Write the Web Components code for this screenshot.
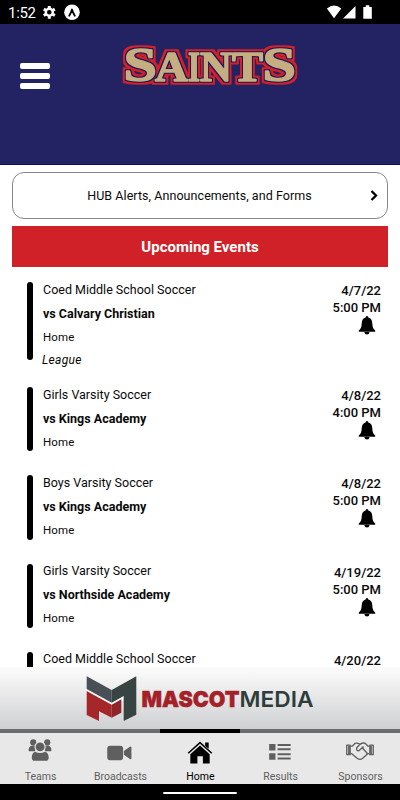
<!DOCTYPE html>
<html lang="en">
<head>
<meta charset="utf-8">
<title>Saints</title>
<style>
  body {
    margin: 0;
    font-family: Roboto, "Liberation Sans", sans-serif;
    color: #0a0a0a;
    background: #fff;
  }
</style>
</head>
<body>
<saints-app></saints-app>

<script>
/**
 * @param {string} name
 * @param {string} html
 */
function define (name, html) {
  customElements.define(name, class extends HTMLElement {
    constructor () {
      super();
      this.attachShadow({ mode: 'open' }).innerHTML = html;
    }
  });
}

define('status-bar', /*html*/ `
  <style>
    :host {
      display: flex;
      align-items: center;
      height: 24px;
      padding: 0 28px 0 8px;
      background: #000;
      color: #fff;
      font-size: 15px;
    }
    time { width: 35px; letter-spacing: -0.3px; line-height: 24px; padding-top: 1px; }
    .left { margin-right: auto; }
    svg { display: block; }
  </style>
  <time>1:52</time>
  <svg class="left" width="40" height="24" viewBox="0 0 40 24">
    <g transform="translate(6.3 12.3)">
      <circle r="3.5" fill="none" stroke="#fff" stroke-width="2.4"/>
      <g fill="none" stroke="#fff" stroke-width="3">
        <path d="M0-4V-6.4M0 4V6.4M-3.5-2-5.5-3.2M3.5-2 5.5-3.2M-3.5 2-5.5 3.2M3.5 2 5.5 3.2"/>
      </g>
    </g>
    <circle cx="29" cy="12.3" r="7.8" fill="#fff"/>
    <path d="M26.2 15.8Q28 13 29 9.5Q30 13 31.8 15.8" fill="none" stroke="#000" stroke-width="1.8" stroke-linecap="round" stroke-linejoin="round"/>
  </svg>
  <svg width="46" height="24" viewBox="0 0 46 24" fill="#fff">
    <path d="M0.9 8.6Q8 2.6 15.3 8.6L8 18.2ZM17 18.5 29.5 6V18.5ZM37.3 7h2.5V5.3h3.5V7h2.5V18.7H37.3Z"/>
  </svg>
`);

define('saints-header', /*html*/ `
  <style>
    :host {
      display: flex;
      height: 140px;
      background: #232262;
      border-bottom: 1px solid #09096b;
    }
    .menu {
      display: flex;
      flex-direction: column;
      gap: 4px;
      padding: 39px 0 0 20px;
      width: 30px;
    }
    .menu i { height: 6px; border-radius: 2px; background: #fff; }
    svg { margin: 11px 0 0 60px; }
    text {
      font-family: "Liberation Serif", serif;
      font-weight: bold;
      font-size: 41.5px;
      fill: #c6ae80;
      stroke: #c6ae80;
      stroke-width: 1.5px;
      stroke-linejoin: round;
    }
    .cap { font-size: 49px; }
  </style>
  <div class="menu"><i></i><i></i><i></i></div>
  <svg width="200" height="60" viewBox="110 35 200 60">
    <!-- navy ring, then red ring, behind the gold lettering -->
    <filter id="rings" x="-10%" y="-20%" width="120%" height="140%" color-interpolation-filters="sRGB">
      <feMorphology in="SourceAlpha" operator="dilate" radius="3" result="wide"/>
      <feGaussianBlur in="wide" stdDeviation="0.5" result="wideSoft"/>
      <feFlood flood-color="#d42027"/>
      <feComposite in2="wideSoft" operator="in" result="red"/>
      <feMorphology in="SourceAlpha" operator="dilate" radius="1" result="thin"/>
      <feGaussianBlur in="thin" stdDeviation="0.6" result="thinSoft"/>
      <feFlood flood-color="#15195c"/>
      <feComposite in2="thinSoft" operator="in" result="navy"/>
      <feMerge>
        <feMergeNode in="red"/>
        <feMergeNode in="navy"/>
        <feMergeNode in="SourceGraphic"/>
      </feMerge>
    </filter>
    <text y="80.5" filter="url(#rings)"><tspan class="cap" x="123.5" textLength="33.5" lengthAdjust="spacingAndGlyphs">S</tspan><tspan x="155" textLength="33" lengthAdjust="spacingAndGlyphs">A</tspan><tspan x="188" textLength="12" lengthAdjust="spacingAndGlyphs">I</tspan><tspan x="200" textLength="32" lengthAdjust="spacingAndGlyphs">N</tspan><tspan x="232" textLength="31" lengthAdjust="spacingAndGlyphs">T</tspan><tspan class="cap" x="262.5" textLength="33.5" lengthAdjust="spacingAndGlyphs">S</tspan></text>
  </svg>
`);

define('alert-link', /*html*/ `
  <style>
    :host {
      display: flex;
      align-items: center;
      box-sizing: border-box;
      height: 47px;
      margin: 7px 12px 0;
      padding: 0 9px 0 16px;
      border: 1px solid #888;
      border-radius: 12px;
      font-size: 12.5px;
    }
    span { flex: 1; text-align: center; letter-spacing: 0.06px; }
  </style>
  <span><slot></slot></span>
  <svg width="8" height="12" viewBox="0 0 8 12"><path d="M1.5 1 6 5.5 1.5 10" fill="none" stroke="#000" stroke-width="2.3"/></svg>
`);

define('section-title', /*html*/ `
  <style>
    :host {
      display: block;
      height: 41px;
      line-height: 43px;
      margin: 7px 12px 0;
      background: #d02128;
      color: #fff;
      font-size: 15px;
      font-weight: bold;
      text-align: center;
    }
  </style>
  <slot></slot>
`);

customElements.define('event-row', class extends HTMLElement {
  constructor () {
    super();
    const get = name => this.getAttribute(name) || '';
    const div = (name, text) => text ? `<div class="${name}">${text}</div>` : '';
    const opponent = get('opponent');
    this.attachShadow({ mode: 'open' }).innerHTML = /*html*/ `
      <style>
        :host {
          display: flex;
          flex: none;
          height: 64.3px;
          margin: 0 19px 24px 27px;
          font-size: 12.5px;
        }
        :host([league]) { height: 78px; margin-bottom: 27px; }
        .bar { width: 5.5px; border-radius: 3px; background: #000; }
        .info { flex: 1; padding-left: 10.5px; margin-top: -0.5px; white-space: nowrap; }
        .info div { line-height: 15px; }
        .info .team { height: 24px; }
        .info .opponent { height: 24px; font-weight: bold; }
        .info .place { height: 23px; font-size: 11.5px; letter-spacing: 0.1px; }
        .info .league { font-size: 12px; font-style: italic; margin-left: -1px; letter-spacing: 0.3px; }
        .when {
          text-align: right;
          font-weight: 500;
          font-size: 13px;
          line-height: 17px;
        }
        svg { display: block; margin: 0 5px 0 auto; }
      </style>
      <div class="bar"></div>
      <div class="info">
        ${div('team', get('team'))}
        ${div('opponent', opponent && 'vs ' + opponent)}
        ${div('place', get('place'))}
        ${div('league', this.hasAttribute('league') && 'League')}
      </div>
      <div class="when">
        ${div('date', get('date'))}
        ${div('time', get('time'))}
        <svg width="18" height="19" viewBox="0 0 18 19">
          <path d="M9 0C10 0 10.2 .8 10.3 1.6C13 2.3 14.2 4.5 14.3 7.5C14.4 11 15.2 12.8 17.2 14.5V15.8H0.8V14.5C2.8 12.8 3.6 11 3.7 7.5C3.8 4.5 5 2.3 7.7 1.6C7.8 .8 8 0 9 0ZM6.3 16H11.5Q11.3 18.5 9 18.5T6.3 16Z"/>
        </svg>
      </div>
    `;
  }
});

define('sponsor-banner', /*html*/ `
  <style>
    :host {
      display: block;
      flex: none;
      height: 62px;
      background: linear-gradient(#fcfcfc, #cfd0d2);
    }
    svg { display: block; }
    text { font-family: Inter, sans-serif; font-size: 22px; }
  </style>
  <svg width="400" height="62" viewBox="0 667 400 62">
    <path fill="#fff" d="M86 689 111.7 702 123.7 695V700L111.7 706 86 692Z"/>
    <path fill="#484f56" d="M86.7 676.3 111.7 690V702.7L86.7 689Z"/>
    <path fill="#384441" d="M111.7 690 136.3 676.3V714.7L123.7 721V696L111.7 702.7Z"/>
    <path fill="#a6272a" d="M86.7 691 111.7 704.7V717.7L99 711.3V721L86.7 715Z"/>
    <path fill="#8e2629" d="M111.7 704.7 121.3 699.3V712.7L111.7 717.7Z"/>
    <text x="141.5" y="706.8" font-weight="900" fill="#a32127" stroke="#a32127" stroke-width=".4" textLength="98" lengthAdjust="spacingAndGlyphs">MASCOT</text>
    <text x="239.5" y="706.8" font-weight="600" fill="#2f3d3a" textLength="74" lengthAdjust="spacingAndGlyphs">MEDIA</text>
  </svg>
`);

define('tab-item', /*html*/ `
  <style>
    :host {
      display: flex;
      flex-direction: column;
      align-items: center;
      flex: 1;
      border-top: 4px solid #6b6c6d;
      color: #5f5f5f;
      font-size: 10.5px;
    }
    :host([active]) { border-color: #000; color: #000; }
    ::slotted(svg) { display: block; margin-top: 3px; }
    span { line-height: 15px; margin-top: 4px; padding-left: 1px; }
  </style>
  <slot name="icon"></slot>
  <span><slot></slot></span>
`);

define('tab-bar', /*html*/ `
  <style>
    :host { display: flex; flex: none; height: 55px; background: #e8e8e8; }
  </style>
  <slot></slot>
`);

define('gesture-bar', /*html*/ `
  <style>
    :host {
      display: flex;
      flex: none;
      align-items: center;
      justify-content: center;
      height: 16px;
      background: #000;
    }
    i { width: 74px; height: 2px; margin-top: 1px; border-radius: 1px; background: #fff; }
  </style>
  <i></i>
`);

define('saints-app', /*html*/ `
  <style>
    :host { display: flex; flex-direction: column; width: 400px; height: 800px; overflow: hidden; }
    .events {
      display: flex;
      flex-direction: column;
      flex: 1;
      min-height: 0;
      padding-top: 15px;
      box-sizing: border-box;
      overflow: hidden;
    }
  </style>
  <status-bar></status-bar>
  <saints-header></saints-header>
  <alert-link>HUB Alerts, Announcements, and Forms</alert-link>
  <section-title>Upcoming Events</section-title>
  <div class="events">
    <event-row team="Coed Middle School Soccer" opponent="Calvary Christian" place="Home" date="4/7/22" time="5:00 PM" league></event-row>
    <event-row team="Girls Varsity Soccer" opponent="Kings Academy" place="Home" date="4/8/22" time="4:00 PM"></event-row>
    <event-row team="Boys Varsity Soccer" opponent="Kings Academy" place="Home" date="4/8/22" time="5:00 PM"></event-row>
    <event-row team="Girls Varsity Soccer" opponent="Northside Academy" place="Home" date="4/19/22" time="5:00 PM"></event-row>
    <event-row team="Coed Middle School Soccer" date="4/20/22"></event-row>
  </div>
  <sponsor-banner></sponsor-banner>
  <tab-bar>
    <tab-item>
      <svg slot="icon" width="30" height="30" viewBox="0 0 30 30" fill="currentColor">
        <circle cx="8" cy="6.6" r="3.2"/><circle cx="22.5" cy="6.6" r="3.2"/>
        <path d="M3.2 15.5Q3 10.2 6.5 10H10V15.8H4ZM26.8 15.5Q27 10.2 23.5 10H20V15.8H26Z"/>
        <circle cx="15.1" cy="11.3" r="5.2" stroke="#e8e8e8" stroke-width="1.2"/>
        <path d="M10 16.3Q15 19 20.2 16.3Q24 17.5 24 22.5Q24 25.7 21 25.7H9.5Q6.5 25.7 6.5 22.5Q6.5 17.5 10 16.3Z"/>
      </svg>
      Teams
    </tab-item>
    <tab-item>
      <svg slot="icon" width="30" height="30" viewBox="0 0 30 30" fill="currentColor">
        <rect x="1.8" y="10" width="16.4" height="15" rx="3"/>
        <path d="M19 15.5 25.2 11Q26.8 10.3 26.8 11.8V23Q26.8 24.5 25.2 23.8L19 19.5Z"/>
      </svg>
      Broadcasts
    </tab-item>
    <tab-item active>
      <svg slot="icon" width="30" height="30" viewBox="0 0 30 30">
        <path d="M2.8 17.8 15 6.8 27.2 17.8" fill="none" stroke="#000" stroke-width="1.6"/>
        <path d="M5 18.8 15 9.8 25 18.8V28.5H18V21H12.3V28.5H5ZM20.3 6.8H24V13.3L20.3 10Z"/>
      </svg>
      Home
    </tab-item>
    <tab-item>
      <svg slot="icon" width="30" height="30" viewBox="0 0 30 30" fill="currentColor">
        <path d="M3.8 8.3H10.3V15H3.8ZM3.8 17.8H10.3V24.5H3.8ZM12.5 8.3H26V10.3H12.5ZM12.5 12.8H26V14.8H12.5ZM12.5 17.8H26V19.8H12.5ZM12.5 22.3H26V24.3H12.5Z"/>
      </svg>
      Results
    </tab-item>
    <tab-item>
      <svg slot="icon" width="30" height="30" viewBox="0 0 30 30" fill="none" stroke="currentColor" stroke-width="1.4" stroke-linejoin="round">
        <path d="M1.3 9.5H4.8V19.2H1.3ZM25.2 9.5H28.7V19.2H25.2Z"/>
        <path d="M3.6 10V18.5M26.4 10V18.5" stroke-width="1.8"/>
        <path d="M4.8 10.5H7L10 7.6Q12.5 6.8 15 8.6Q18 6.6 20.3 7.6L23.3 10.5H25.2M4.8 18.3H6.5L12 23Q15 25.2 17.5 23.3L23 18.3H25.2M15 8.6 11.6 12.2Q11 15.5 13.8 15.2L17.3 12.2 22.2 17.6Q22.6 19.3 20.8 20.2M17 11.8 19 11.3"/>
      </svg>
      Sponsors
    </tab-item>
  </tab-bar>
  <gesture-bar></gesture-bar>
`);
</script>
</body>
</html>
